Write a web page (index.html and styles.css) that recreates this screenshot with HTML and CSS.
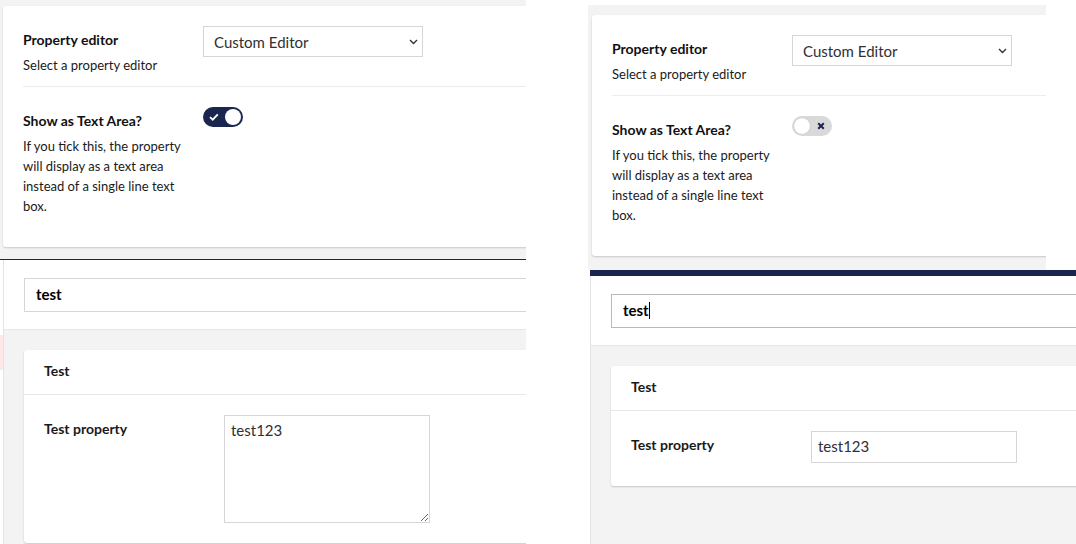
FILE: index.html
```html
<!DOCTYPE html>
<html lang="en">
<head>
<meta charset="utf-8">
<title>Property editor comparison</title>
<link rel="stylesheet" href="styles.css">
</head>
<body>
<div class="screen">
  <section class="panel panel-left">
    <div class="top">
      <div class="card settings">
        <div class="row row-first">
          <div class="label-col">
            <div class="label">Property editor</div>
            <div class="desc">Select a property editor</div>
          </div>
          <div class="select">
            <span>Custom Editor</span>
            <svg class="chev" width="9" height="6" viewBox="0 0 9 6"><path d="M1 1 L4.5 4.5 L8 1" fill="none" stroke="#333" stroke-width="1.4"/></svg>
          </div>
        </div>
        <div class="row">
          <div class="label-col">
            <div class="label">Show as Text Area?</div>
            <div class="desc">If you tick this, the property will display as a text area instead of a single line text box.</div>
          </div>
          <div class="toggle toggle-on">
            <svg class="tick" width="10" height="8" viewBox="0 0 10 8"><path d="M1 4.2 L3.7 6.7 L8.8 1.3" fill="none" stroke="#fff" stroke-width="1.8"/></svg>
            <span class="knob"></span>
          </div>
        </div>
      </div>
    </div>
    <div class="rule-thin"></div>
    <div class="lower">
      <div class="gutter"><div class="pink"></div></div>
      <div class="main">
        <div class="name-bar"><div class="name-input">test</div></div>
        <div class="content">
          <div class="card group">
            <div class="group-head">Test</div>
            <div class="group-body">
              <div class="prop-label">Test property</div>
              <textarea class="textarea">test123</textarea>
            </div>
          </div>
        </div>
      </div>
    </div>
  </section>

  <section class="panel panel-right">
    <div class="top top-right">
      <div class="card settings">
        <div class="row row-first">
          <div class="label-col">
            <div class="label">Property editor</div>
            <div class="desc">Select a property editor</div>
          </div>
          <div class="select">
            <span>Custom Editor</span>
            <svg class="chev" width="9" height="6" viewBox="0 0 9 6"><path d="M1 1 L4.5 4.5 L8 1" fill="none" stroke="#333" stroke-width="1.4"/></svg>
          </div>
        </div>
        <div class="row">
          <div class="label-col">
            <div class="label">Show as Text Area?</div>
            <div class="desc">If you tick this, the property will display as a text area instead of a single line text box.</div>
          </div>
          <div class="toggle toggle-off">
            <span class="knob"></span>
            <svg class="cross" width="8" height="8" viewBox="0 0 8 8"><path d="M1.2 1.2 L6.8 6.8 M6.8 1.2 L1.2 6.8" fill="none" stroke="#1b264f" stroke-width="2"/></svg>
          </div>
        </div>
      </div>
    </div>
    <div class="rule-bar"></div>
    <div class="lower lower-right">
      <div class="main">
        <div class="name-bar"><div class="name-input name-input-focus">test<span class="caret"></span></div></div>
        <div class="content">
          <div class="card group">
            <div class="group-head">Test</div>
            <div class="group-body group-body-short">
              <div class="prop-label">Test property</div>
              <div class="text-input">test123</div>
            </div>
          </div>
        </div>
      </div>
    </div>
  </section>
</div>
</body>
</html>
```

FILE: styles.css
```css
html, body {
  margin: 0;
  padding: 0;
  background: #fff;
}
body {
  font-family: Lato, "Open Sans", "Liberation Sans", sans-serif;
  color: #1a1a1a;
}
.screen {
  display: flex;
  width: 1076px;
  height: 544px;
  overflow: hidden;
  background: #fff;
}
.panel {
  flex: none;
  height: 544px;
  overflow: hidden;
  display: flex;
  flex-direction: column;
}
.panel-left { width: 526px; }
.panel-right { width: 488px; margin-left: 62px; }

.top {
  background: #f4f3f3;
  padding: 6px 0 12px 3px;
  overflow: hidden;
}
.top-right {
  margin-top: 5px;
  width: 458px;
  box-sizing: border-box;
  padding: 10px 0 14px 4px;
}
.card {
  background: #fff;
  border-radius: 3px;
  box-shadow: 0 1px 2px rgba(0, 0, 0, 0.18);
  margin-right: -10px;
}
.settings {
  height: 241px;
  box-sizing: border-box;
  padding-left: 20px;
}
.row { display: flex; align-items: flex-start; }
.row-first {
  padding: 20px 0 11px;
  border-bottom: 1px solid #ececec;
}
.row + .row { padding-top: 20px; }
.label-col {
  width: 180px;
  flex: none;
  box-sizing: border-box;
  padding: 4px 14px 0 0;
}
.label {
  font-size: 14px;
  font-weight: 700;
  line-height: 20px;
  color: #111;
}
.desc {
  font-size: 13px;
  line-height: 20px;
  margin-top: 5px;
  color: #1a1a1a;
}
.select {
  width: 220px;
  height: 31px;
  box-sizing: border-box;
  border: 1px solid #d6d5d7;
  display: flex;
  align-items: center;
  justify-content: space-between;
  padding: 0 4px 0 10px;
  font-size: 15px;
  color: #303033;
}
.chev { margin-top: 1px; }

.toggle {
  width: 40px;
  height: 20px;
  border-radius: 10px;
  box-sizing: border-box;
  display: flex;
  align-items: center;
  justify-content: space-between;
}
.toggle-on {
  background: #1b264f;
  padding: 0 2px 0 6px;
}
.toggle-off {
  background: #d9d9d9;
  padding: 0 7px 0 2px;
}
.knob {
  width: 16px;
  height: 16px;
  border-radius: 50%;
  background: #fff;
}
.toggle-off .knob { box-shadow: 0 0 1px rgba(0, 0, 0, 0.25); }

.rule-thin { height: 1px; background: #1b264f; flex: none; }
.rule-bar { height: 6px; background: #1b264f; margin-left: 2px; flex: none; }

.lower {
  flex: 1;
  display: flex;
  min-height: 0;
}
.lower-right { margin-left: 2px; }
.gutter { width: 3px; flex: none; }
.pink { margin-top: 75px; height: 35px; background: #fde7e7; }
.main {
  flex: 1;
  min-width: 0;
  border-left: 1px solid #e4e4e4;
  display: flex;
  flex-direction: column;
}
.name-bar {
  padding: 18px 0 17px 20px;
  border-bottom: 1px solid #e8e7e7;
  overflow: hidden;
}
.name-input {
  height: 34px;
  box-sizing: border-box;
  border: 1px solid #d6d5d7;
  margin-right: -10px;
  padding: 0 11px;
  font-size: 15px;
  font-weight: 700;
  line-height: 30px;
  color: #000;
}
.name-input-focus { border-color: #b9b9b9; }
.caret {
  display: inline-block;
  width: 1px;
  height: 17px;
  background: #000;
  vertical-align: -3px;
}
.content {
  flex: 1;
  background: #f4f3f3;
  padding: 20px 0 0 20px;
  overflow: hidden;
}
.group-head {
  padding: 11px 20px 13px;
  font-size: 14px;
  font-weight: 700;
  line-height: 20px;
  border-bottom: 1px solid #e8e7e7;
}
.group-body {
  display: flex;
  align-items: flex-start;
  padding: 20px;
}
.group-body-short { padding-bottom: 23px; }
.prop-label {
  width: 180px;
  flex: none;
  padding-top: 4px;
  font-size: 14px;
  font-weight: 700;
  line-height: 20px;
}
.textarea {
  display: block;
  width: 206px;
  height: 108px;
  box-sizing: border-box;
  margin: 0;
  border: 1px solid #d6d5d7;
  padding: 4px 6px;
  font-family: Lato, "Open Sans", sans-serif;
  font-size: 15px;
  line-height: 20px;
  color: #303033;
  outline: none;
}
.text-input {
  width: 206px;
  height: 32px;
  box-sizing: border-box;
  border: 1px solid #d6d5d7;
  padding: 0 6px;
  font-size: 15px;
  line-height: 29px;
  color: #303033;
}
```
